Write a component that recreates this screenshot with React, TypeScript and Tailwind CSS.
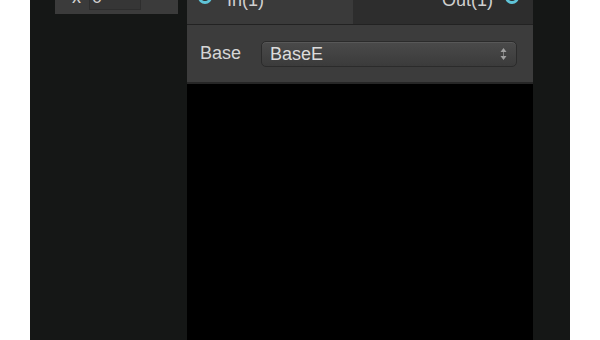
import React from "react";

function Port() {
  return <span className="block w-[14px] h-[14px] rounded-full border-[3px] border-[#5fc4d8] bg-[#2a2a2a]" />;
}

export default function App() {
  return (
    <div className="w-[600px] h-[340px] bg-white flex overflow-hidden" style={{ fontFamily: '"Liberation Sans", Arial, sans-serif' }}>
      <div className="ml-[30px] w-[540px] h-full bg-[#151716] flex">
        {/* left column with scrolled node */}
        <div className="w-[157px] shrink-0 pl-[25px]">
          <div className="w-[123px] h-[34px] -mt-[20px] bg-[#3b3b3b] flex items-center pl-[17px] pr-[10px] text-[18px] text-[#d0d0d0]">
            <span className="leading-none -mt-[1px]">x</span>
            <div className="ml-[8px] w-[52px] h-[25px] bg-[#363636] border border-[#2e2e2e] flex items-center pl-[2px] leading-none">0</div>
            <span className="ml-auto -mt-[12px]">
              <span className="block w-[12px] h-[12px] rounded-full border-[3px] border-[#2a2a2a] bg-[#5fc4d8]" />
            </span>
          </div>
        </div>

        {/* middle column */}
        <div className="w-[346px] shrink-0 flex flex-col bg-black">
          <div className="h-[24px] flex text-[18px] text-[#d0d0d0] leading-none">
            <div className="w-[166px] bg-[#3a3a3a] flex items-end pl-[11px] pb-[15px]">
              <span className="mb-[5px]"><Port /></span>
              <span className="ml-[15px]">In(1)</span>
            </div>
            <div className="flex-1 bg-[#2d2d2d] flex items-end justify-end pr-[14px] pb-[15px]">
              <span>Out(1)</span>
              <span className="ml-[12px] mb-[5px]"><Port /></span>
            </div>
          </div>
          <div className="h-[1px] bg-[#222222]" />
          <div className="h-[57px] bg-[#3c3c3c] flex items-center pl-[13px] text-[18px] text-[#d6d6d6]">
            <span className="w-[61px] -mt-[1px]">Base</span>
            <div className="w-[256px] h-[26px] rounded-[5px] border border-[#2b2b2b] bg-gradient-to-b from-[#4a4a4a] to-[#3b3b3b] shadow-[inset_0_1px_0_#585858] flex items-center pl-[8px] pr-[9px]">
              <span className="leading-none text-[#dcdcdc]">BaseE</span>
              <svg className="ml-auto" width="7" height="14" viewBox="0 0 7 14">
                <path d="M3.5 1 L6.5 5 H0.5 Z" fill="#a0a0a0" />
                <path d="M3.5 13 L6.5 9 H0.5 Z" fill="#a0a0a0" />
                <rect x="3" y="5" width="1" height="4" fill="#808080" />
              </svg>
            </div>
          </div>
          <div className="h-[2px] bg-[#262626]" />
          <div className="flex-1 bg-black" />
        </div>

        {/* right column */}
        <div className="flex-1" />
      </div>
    </div>
  );
}
